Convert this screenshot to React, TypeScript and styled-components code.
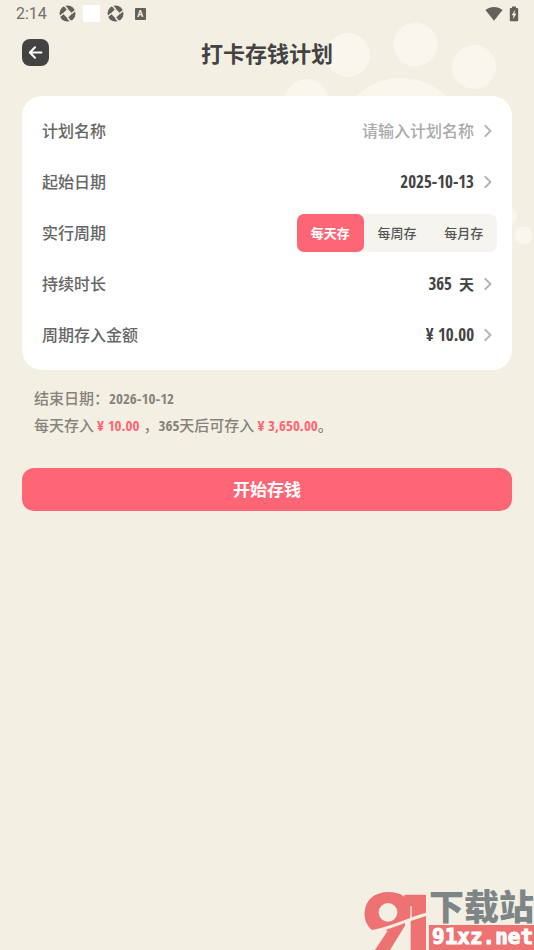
import React, { useState } from "react";
import styled, { createGlobalStyle } from "styled-components";

const GlobalStyle = createGlobalStyle`
  *, *::before, *::after { box-sizing: border-box; }
  body {
    margin: 0;
    background: #f4efe3;
    color: #434343;
    font-family: "Open Sans Condensed", "Liberation Sans Narrow", "Noto Sans CJK SC", sans-serif;
  }
  button, input { font: inherit; color: inherit; }
`;

const Page = styled.div`
  position: relative;
  min-height: 100vh;
  overflow: hidden;
  background: #f4efe3;
`;

const PawPrints = styled.svg`
  position: absolute;
  top: 0;
  right: 0;
  width: 264px;
  height: 260px;
  fill: #faf6ee;
`;

const StatusBar = styled.div`
  position: relative;
  display: flex;
  align-items: center;
  justify-content: space-between;
  height: 27px;
  padding: 0 15px 0 16px;
  color: #62615b;
`;

const StatusGroup = styled.div<{ $gap: number }>`
  display: flex;
  align-items: center;
  gap: ${(p) => p.$gap}px;
`;

const Clock = styled.time`
  margin-right: 5px;
  font: 400 16px/20px Roboto, sans-serif;
  color: #706f68;
`;

const BlankIcon = styled.span`
  width: 17px;
  height: 17px;
  border-radius: 1px;
  background: #fff;
`;

const LetterIcon = styled.span`
  width: 11px;
  height: 12px;
  margin-left: 4px;
  border-radius: 1px;
  background: #62615b;
  color: #f4efe3;
  font: 700 9px/12px Roboto, sans-serif;
  text-align: center;
`;

const Header = styled.header`
  position: relative;
  display: grid;
  grid-template-columns: 27px 1fr 27px;
  align-items: center;
  height: 51px;
  padding: 0 22px;
`;

const BackButton = styled.button`
  display: grid;
  place-items: center;
  width: 27px;
  height: 27px;
  padding: 0;
  border: 0;
  border-radius: 8px;
  background: #434343;
  color: #fff;
`;

const Title = styled.h1`
  margin: 0;
  font-size: 22px;
  line-height: 32px;
  font-weight: 700;
  text-align: center;
`;

const Main = styled.main`
  position: relative;
  padding: 18px 22px 0;
`;

const Card = styled.section`
  padding: 9px 15px 10px 20px;
  border-radius: 20px;
  background: #fff;
`;

const Row = styled.div`
  display: flex;
  align-items: center;
  justify-content: space-between;
  height: 51px;
`;

const RowLabel = styled.label`
  flex: none;
  font-size: 16px;
  line-height: 24px;
  font-weight: 500;
  color: #666;
`;

const Field = styled.div`
  display: flex;
  flex: 1;
  align-items: center;
  justify-content: flex-end;
  gap: 10px;
  padding-right: 5px;
`;

const NameInput = styled.input`
  flex: 1;
  min-width: 0;
  padding: 0;
  border: 0;
  outline: 0;
  background: transparent;
  font-size: 16px;
  line-height: 24px;
  font-weight: 500;
  text-align: right;
  &::placeholder { color: #aaa; opacity: 1; }
`;

const ValueButton = styled.button`
  display: flex;
  align-items: center;
  gap: 10px;
  padding: 0 5px 0 0;
  border: 0;
  background: transparent;
  font-size: 17px;
  line-height: 24px;
  font-weight: 700;
`;

const Value = styled.span`
  display: flex;
  gap: 7px;
`;

const Unit = styled.span`
  font-size: 15px;
`;

const Segments = styled.div`
  display: grid;
  grid-template-columns: repeat(3, 1fr);
  width: 200px;
  height: 38px;
  border-radius: 8px;
  background: #f6f4ee;
`;

const Segment = styled.label<{ $active: boolean }>`
  display: grid;
  place-items: center;
  border-radius: 7px;
  background: ${(p) => (p.$active ? "#ff6675" : "transparent")};
  color: ${(p) => (p.$active ? "#fff" : "#555")};
  font-size: 13px;
  line-height: 20px;
  font-weight: ${(p) => (p.$active ? 700 : 500)};
`;

const HiddenRadio = styled.input`
  position: absolute;
  appearance: none;
  margin: 0;
  opacity: 0;
`;

const Summary = styled.div`
  padding: 15px 12px 0;
  font-size: 15px;
  line-height: 27px;
  font-weight: 500;
  color: #86837c;
`;

const SummaryLine = styled.p`
  margin: 0;
`;

const Figure = styled.b`
  font-weight: 700;
`;

const Amount = styled.strong`
  margin: 0 4px 0 3px;
  color: #ff6675;
  font-weight: 700;
`;

const TotalAmount = styled(Amount)`
  margin-right: 0;
`;

const StartButton = styled.button`
  display: block;
  width: 100%;
  height: 43px;
  margin-top: 29px;
  border: 0;
  border-radius: 12px;
  background: #ff6675;
  color: #fff;
  font-size: 17px;
  line-height: 26px;
  font-weight: 700;
`;

const SiteMark = styled.aside`
  position: absolute;
  right: 0;
  bottom: 0;
  display: flex;
  align-items: flex-end;
  gap: 2px;
`;

const SiteText = styled.div`
  display: flex;
  flex-direction: column;
`;

const SiteName = styled.span`
  font-size: 35px;
  line-height: 36px;
  font-weight: 900;
  color: #7d8587;
`;

const SiteAddress = styled.span`
  height: 25px;
  padding-left: 3px;
  background: #ef7272;
  color: #fff;
  font: 700 21px/25px "DejaVu Sans Mono", monospace;
  -webkit-text-stroke: 1px #fff;
`;

const Aperture = () => (
  <svg width="17" height="17" viewBox="0 0 17 17" aria-hidden="true">
    <circle cx="8.5" cy="8.5" r="8" fill="currentColor" />
    <path d="M8.5 3.8 13.2 8.5 8.5 13.2 3.8 8.5Z" fill="#f4efe3" />
    <path d="M8.5 4.3 5.2 .4M12.7 8.5l3.9-3.3M8.5 12.7l3.3 3.9M4.3 8.5.4 11.8" stroke="#f4efe3" strokeWidth="1.5" />
  </svg>
);

const Chevron = () => (
  <svg width="8" height="14" viewBox="0 0 8 14" fill="none" aria-hidden="true">
    <path d="m1.3 1.8 5.2 5.2-5.2 5.2" stroke="#b3b3b3" strokeWidth="1.9" strokeLinecap="round" strokeLinejoin="round" />
  </svg>
);

const periods = ["每天存", "每周存", "每月存"];

export default function App() {
  const [period, setPeriod] = useState(periods[0]);
  const [name, setName] = useState("");

  return (
    <Page>
      <GlobalStyle />
      <PawPrints viewBox="270 0 264 260" aria-hidden="true">
        <circle cx="348" cy="55" r="22" />
        <circle cx="415.5" cy="44.5" r="22" />
        <circle cx="474" cy="67" r="22" />
        <circle cx="306.5" cy="101" r="22" />
        <circle cx="401" cy="143" r="65" />
        <circle cx="508" cy="216" r="9" />
        <circle cx="523.5" cy="235.5" r="9" />
      </PawPrints>

      <StatusBar>
        <StatusGroup $gap={7}>
          <Clock>2:14</Clock>
          <Aperture />
          <BlankIcon />
          <Aperture />
          <LetterIcon>A</LetterIcon>
        </StatusGroup>
        <StatusGroup $gap={6}>
          <svg width="18" height="14" viewBox="0 0 18 14" fill="currentColor" aria-hidden="true">
            <path d="M.4 3.1C5.5-.9 12.5-.9 17.6 3.1L9 13.8Z" />
          </svg>
          <svg width="10" height="16" viewBox="0 0 10 16" aria-hidden="true">
            <path d="M3 .5h4V2h1.2q1 0 1 1v11.3q0 1-1 1H1.8q-1 0-1-1V3q0-1 1-1H3Z" fill="currentColor" />
            <path d="M6.1 3.8 2.7 9.2h1.9l-.7 4 3.5-5.4H5.5Z" fill="#f4efe3" />
          </svg>
        </StatusGroup>
      </StatusBar>

      <Header>
        <BackButton aria-label="返回">
          <svg width="15" height="15" viewBox="0 0 15 15" fill="none" aria-hidden="true">
            <path d="M7 2.2 1.8 7.5 7 12.8M2 7.5h11.5" stroke="currentColor" strokeWidth="2" strokeLinecap="round" strokeLinejoin="round" />
          </svg>
        </BackButton>
        <Title>打卡存钱计划</Title>
      </Header>

      <Main>
        <Card>
          <Row>
            <RowLabel htmlFor="plan-name">计划名称</RowLabel>
            <Field>
              <NameInput id="plan-name" placeholder="请输入计划名称" value={name} onChange={(e) => setName(e.target.value)} />
              <Chevron />
            </Field>
          </Row>
          <Row>
            <RowLabel htmlFor="start-date">起始日期</RowLabel>
            <ValueButton id="start-date">2025-10-13<Chevron /></ValueButton>
          </Row>
          <Row>
            <RowLabel as="span" id="period-label">实行周期</RowLabel>
            <Segments role="radiogroup" aria-labelledby="period-label">
              {periods.map((p) => (
                <Segment key={p} $active={p === period}>
                  <HiddenRadio type="radio" name="period" checked={p === period} onChange={() => setPeriod(p)} />
                  {p}
                </Segment>
              ))}
            </Segments>
          </Row>
          <Row>
            <RowLabel htmlFor="duration">持续时长</RowLabel>
            <ValueButton id="duration"><Value>365<Unit>天</Unit></Value><Chevron /></ValueButton>
          </Row>
          <Row>
            <RowLabel htmlFor="amount">周期存入金额</RowLabel>
            <ValueButton id="amount">¥ 10.00<Chevron /></ValueButton>
          </Row>
        </Card>

        <Summary>
          <SummaryLine>结束日期：<Figure>2026-10-12</Figure></SummaryLine>
          <SummaryLine>
            每天存入<Amount>¥ 10.00</Amount>，<Figure>365</Figure>天后可存入<TotalAmount>¥ 3,650.00</TotalAmount>。
          </SummaryLine>
        </Summary>

        <StartButton>开始存钱</StartButton>
      </Main>

      <SiteMark>
        <svg width="63" height="59" viewBox="12 14 189 177" fill="#ef7272" aria-hidden="true">
          <path d="M36 131C18 118 12 95 14 75 17 40 45 17 85 17q30 0 48 14v-6h65v54C150 92 92 120 36 131Z" />
          <path d="M75 132 135 110v8L90 191H45L83 133Z" />
          <path d="M152 104 198 89v102h-46Z" />
          <circle cx="84" cy="78" r="28" fill="#f4efe3" />
          <path d="M153 60v38" stroke="#f4efe3" strokeWidth="4" />
        </svg>
        <SiteText>
          <SiteName>下载站</SiteName>
          <SiteAddress>91xz.net</SiteAddress>
        </SiteText>
      </SiteMark>
    </Page>
  );
}
